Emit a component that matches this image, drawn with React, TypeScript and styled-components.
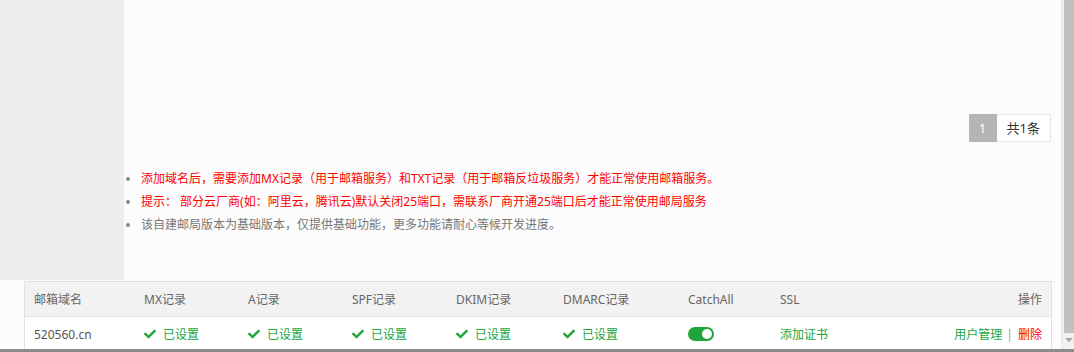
import React from "react";
import styled, {createGlobalStyle} from "styled-components";
import {FaCheck} from "react-icons/fa";

const GlobalStyle = createGlobalStyle`
  html, body {
    margin: 0;
    padding: 0;
    background: #fcfcfc;
    overflow: hidden;
  }
  body {
    font-family: "Noto Sans", "Noto Sans CJK SC", sans-serif;
    font-size: 12px;
    color: #555;
  }
`

type DomainType = {
    name: string
    catchAll: boolean
}

const domains: Array<DomainType> = [
    {name: "520560.cn", catchAll: true}
]

const tips = [
    {text: "添加域名后，需要添加MX记录（用于邮箱服务）和TXT记录（用于邮箱反垃圾服务）才能正常使用邮箱服务。", red: true},
    {text: "提示： 部分云厂商(如：阿里云，腾讯云)默认关闭25端口，需联系厂商开通25端口后才能正常使用邮局服务", red: true},
    {text: "该自建邮局版本为基础版本，仅提供基础功能，更多功能请耐心等候开发进度。", red: false},
]

const records = ["MX记录", "A记录", "SPF记录", "DKIM记录", "DMARC记录"]

function SetBadge() {
    return <Ok><FaCheck size={12}/><span>已设置</span></Ok>
}

export default function App() {
    return (
        <Screen>
            <GlobalStyle/>
            <Main>
                <TopArea>
                    <Sidebar/>
                    <Content>
                        <Pager>
                            <PageNum>1</PageNum>
                            <PageTotal>共1条</PageTotal>
                        </Pager>
                        <Tips>
                            {tips.map(t => <Tip key={t.text} $red={t.red}>{t.text}</Tip>)}
                        </Tips>
                    </Content>
                </TopArea>
                <TableWrap>
                    <Table>
                        <HeadRow>
                            <Cell>邮箱域名</Cell>
                            {records.map(r => <Cell key={r}>{r}</Cell>)}
                            <Cell>CatchAll</Cell>
                            <Cell>SSL</Cell>
                            <Cell $right>操作</Cell>
                        </HeadRow>
                        {domains.map(d => (
                            <BodyRow key={d.name}>
                                <Cell>{d.name}</Cell>
                                {records.map(r => <Cell key={r}><SetBadge/></Cell>)}
                                <Cell><Switch $on={d.catchAll}/></Cell>
                                <Cell><GreenLink>添加证书</GreenLink></Cell>
                                <Cell $right>
                                    <GreenLink>用户管理</GreenLink>
                                    <Sep>|</Sep>
                                    <RedLink>删除</RedLink>
                                </Cell>
                            </BodyRow>
                        ))}
                    </Table>
                </TableWrap>
            </Main>
            <ScrollBar>
                <Thumb/>
                <ArrowDown/>
            </ScrollBar>
            <BottomEdge/>
        </Screen>
    )
}

const Screen = styled.div`
  display: flex;
  width: 1074px;
  height: 352px;
  position: relative;
  overflow: hidden;
`

const Main = styled.div`
  width: 1061px;
  display: flex;
  flex-direction: column;
`

const TopArea = styled.div`
  display: flex;
  height: 280px;
`

const Sidebar = styled.div`
  width: 124px;
  background: #ededed;
`

const Content = styled.div`
  flex: 1;
  background: #fcfcfc;
  padding-top: 114px;
  padding-right: 10px;
  box-sizing: border-box;
`

const Pager = styled.div`
  display: flex;
  justify-content: flex-end;
`

const PageNum = styled.span`
  width: 28px;
  height: 28px;
  line-height: 28px;
  text-align: center;
  background: #b5b5b5;
  color: #fff;
  font-size: 13px;
`

const PageTotal = styled.span`
  height: 26px;
  line-height: 26px;
  padding: 0 10px;
  border: 1px solid #e8e8e8;
  border-left: none;
  background: #fff;
  color: #333;
  font-size: 13px;
`

const Tips = styled.ul`
  margin: 25px 0 0;
  padding-left: 17px;
`

const Tip = styled.li<{ $red: boolean }>`
  line-height: 23px;
  font-size: 12px;
  color: ${p => p.$red ? "#ff0000" : "#777"};

  &::marker {
    color: #888;
  }
`

const TableWrap = styled.div`
  padding: 1px 9px 0 24px;
  background: #fcfcfc;
`

const Table = styled.div`
  border: 1px solid #e0e0e0;
  border-bottom: none;
  background: #fff;
`

const Row = styled.div`
  display: grid;
  grid-template-columns: 110px 104px 104px 104px 107px 125px 92px 150px 1fr;
  height: 34px;
  align-items: center;
`

const HeadRow = styled(Row)`
  background: #f2f2f2;
  border-bottom: 1px solid #e4e4e4;
  color: #666;
`

const BodyRow = styled(Row)`
  color: #555;
`

const Cell = styled.div<{ $right?: boolean }>`
  padding: 0 9px;
  font-size: 12px;
  white-space: nowrap;
  display: flex;
  align-items: center;
  justify-content: ${p => p.$right ? "flex-end" : "flex-start"};
`

const Ok = styled.span`
  display: inline-flex;
  align-items: center;
  gap: 7px;
  color: #20a53a;
`

const Switch = styled.span<{ $on: boolean }>`
  position: relative;
  width: 26px;
  height: 14px;
  border-radius: 7px;
  background: ${p => p.$on ? "#20a53a" : "#ccc"};

  &::after {
    content: "";
    position: absolute;
    top: 2px;
    left: ${p => p.$on ? "14px" : "2px"};
    width: 10px;
    height: 10px;
    border-radius: 50%;
    background: #fff;
  }
`

const GreenLink = styled.span`
  color: #20a53a;
  cursor: pointer;
`

const RedLink = styled.span`
  color: #ff0000;
  cursor: pointer;
`

const Sep = styled.span`
  color: #999;
  margin: 0 5px 0 4px;
`

const ScrollBar = styled.div`
  width: 13px;
  display: flex;
  flex-direction: column;
  background: #f1f1f1;
  border-left: 2px solid #ececec;
  box-sizing: border-box;
`

const Thumb = styled.div`
  height: 333px;
  margin-left: 1px;
  background: #c1c1c1;
`

const ArrowDown = styled.div`
  width: 0;
  height: 0;
  margin: 5px auto 0;
  border-left: 4px solid transparent;
  border-right: 4px solid transparent;
  border-top: 4px solid #a3a3a3;
`

const BottomEdge = styled.div`
  position: absolute;
  left: 0;
  right: 0;
  bottom: 0;
  height: 3px;
  background: #8c8c8c;
`
